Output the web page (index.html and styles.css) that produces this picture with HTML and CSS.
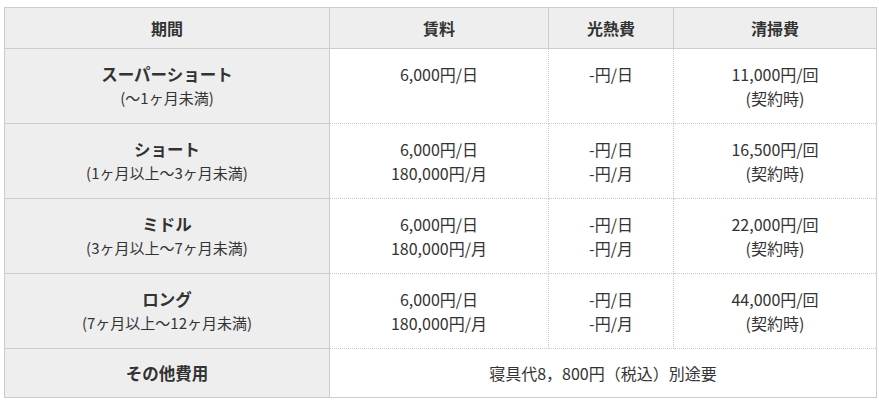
FILE: index.html
```html
<!DOCTYPE html>
<html lang="ja">
<head>
<meta charset="utf-8">
<link rel="stylesheet" href="styles.css">
</head>
<body>
<table class="price">
  <colgroup>
    <col class="c1"><col class="c2"><col class="c3"><col class="c4">
  </colgroup>
  <thead>
    <tr><th>期間</th><th>賃料</th><th>光熱費</th><th>清掃費</th></tr>
  </thead>
  <tbody>
    <tr>
      <th class="term"><span class="name">スーパーショート</span><span class="sub">(〜1ヶ月未満)</span></th>
      <td>6,000円/日</td>
      <td>-円/日</td>
      <td>11,000円/回<br>(契約時)</td>
    </tr>
    <tr>
      <th class="term"><span class="name">ショート</span><span class="sub">(1ヶ月以上〜3ヶ月未満)</span></th>
      <td>6,000円/日<br>180,000円/月</td>
      <td>-円/日<br>-円/月</td>
      <td>16,500円/回<br>(契約時)</td>
    </tr>
    <tr>
      <th class="term"><span class="name">ミドル</span><span class="sub">(3ヶ月以上〜7ヶ月未満)</span></th>
      <td>6,000円/日<br>180,000円/月</td>
      <td>-円/日<br>-円/月</td>
      <td>22,000円/回<br>(契約時)</td>
    </tr>
    <tr>
      <th class="term"><span class="name">ロング</span><span class="sub">(7ヶ月以上〜12ヶ月未満)</span></th>
      <td>6,000円/日<br>180,000円/月</td>
      <td>-円/日<br>-円/月</td>
      <td>44,000円/回<br>(契約時)</td>
    </tr>
    <tr class="other">
      <th class="term"><span class="name">その他費用</span></th>
      <td colspan="3">寝具代8，800円（税込）別途要</td>
    </tr>
  </tbody>
</table>
</body>
</html>
```
FILE: styles.css
```css
html, body {
  margin: 0;
  padding: 0;
  background: #fff;
}
body {
  font-family: "Noto Sans CJK JP", "Noto Sans", sans-serif;
  color: #333;
  font-size: 16px;
  line-height: 24px;
}
.price {
  border-collapse: collapse;
  table-layout: fixed;
  width: 872px;
  margin: 7px 0 0 4px;
  border: 1px solid #ccc;
}
.c1 { width: 325px; }
.c2 { width: 219px; }
.c3 { width: 125px; }
.c4 { width: 203px; }
.price th,
.price td {
  text-align: center;
  vertical-align: top;
  padding: 13px 8px 13px;
}
.price thead th {
  background: #eee;
  font-weight: bold;
  font-size: 16px;
  padding: 8px 8px 8px;
  border: 1px solid #ccc;
}
.price tbody th {
  background: #eee;
  border: 1px solid #ccc;
  font-weight: bold;
  vertical-align: middle;
}
.price tbody td {
  border: 1px dotted #c8c8c8;
  color: #333;
}
.price .other th,
.price .other td {
  padding: 12px 8px 12px;
}
.price tbody tr:last-child td {
  border-bottom: 1px solid #ccc;
}
.price tbody td:last-child {
  border-right: 1px solid #ccc;
}
.term .name {
  display: block;
  font-size: 16.5px;
}
.term .sub {
  display: block;
  font-weight: normal;
  font-size: 15px;
}
```
